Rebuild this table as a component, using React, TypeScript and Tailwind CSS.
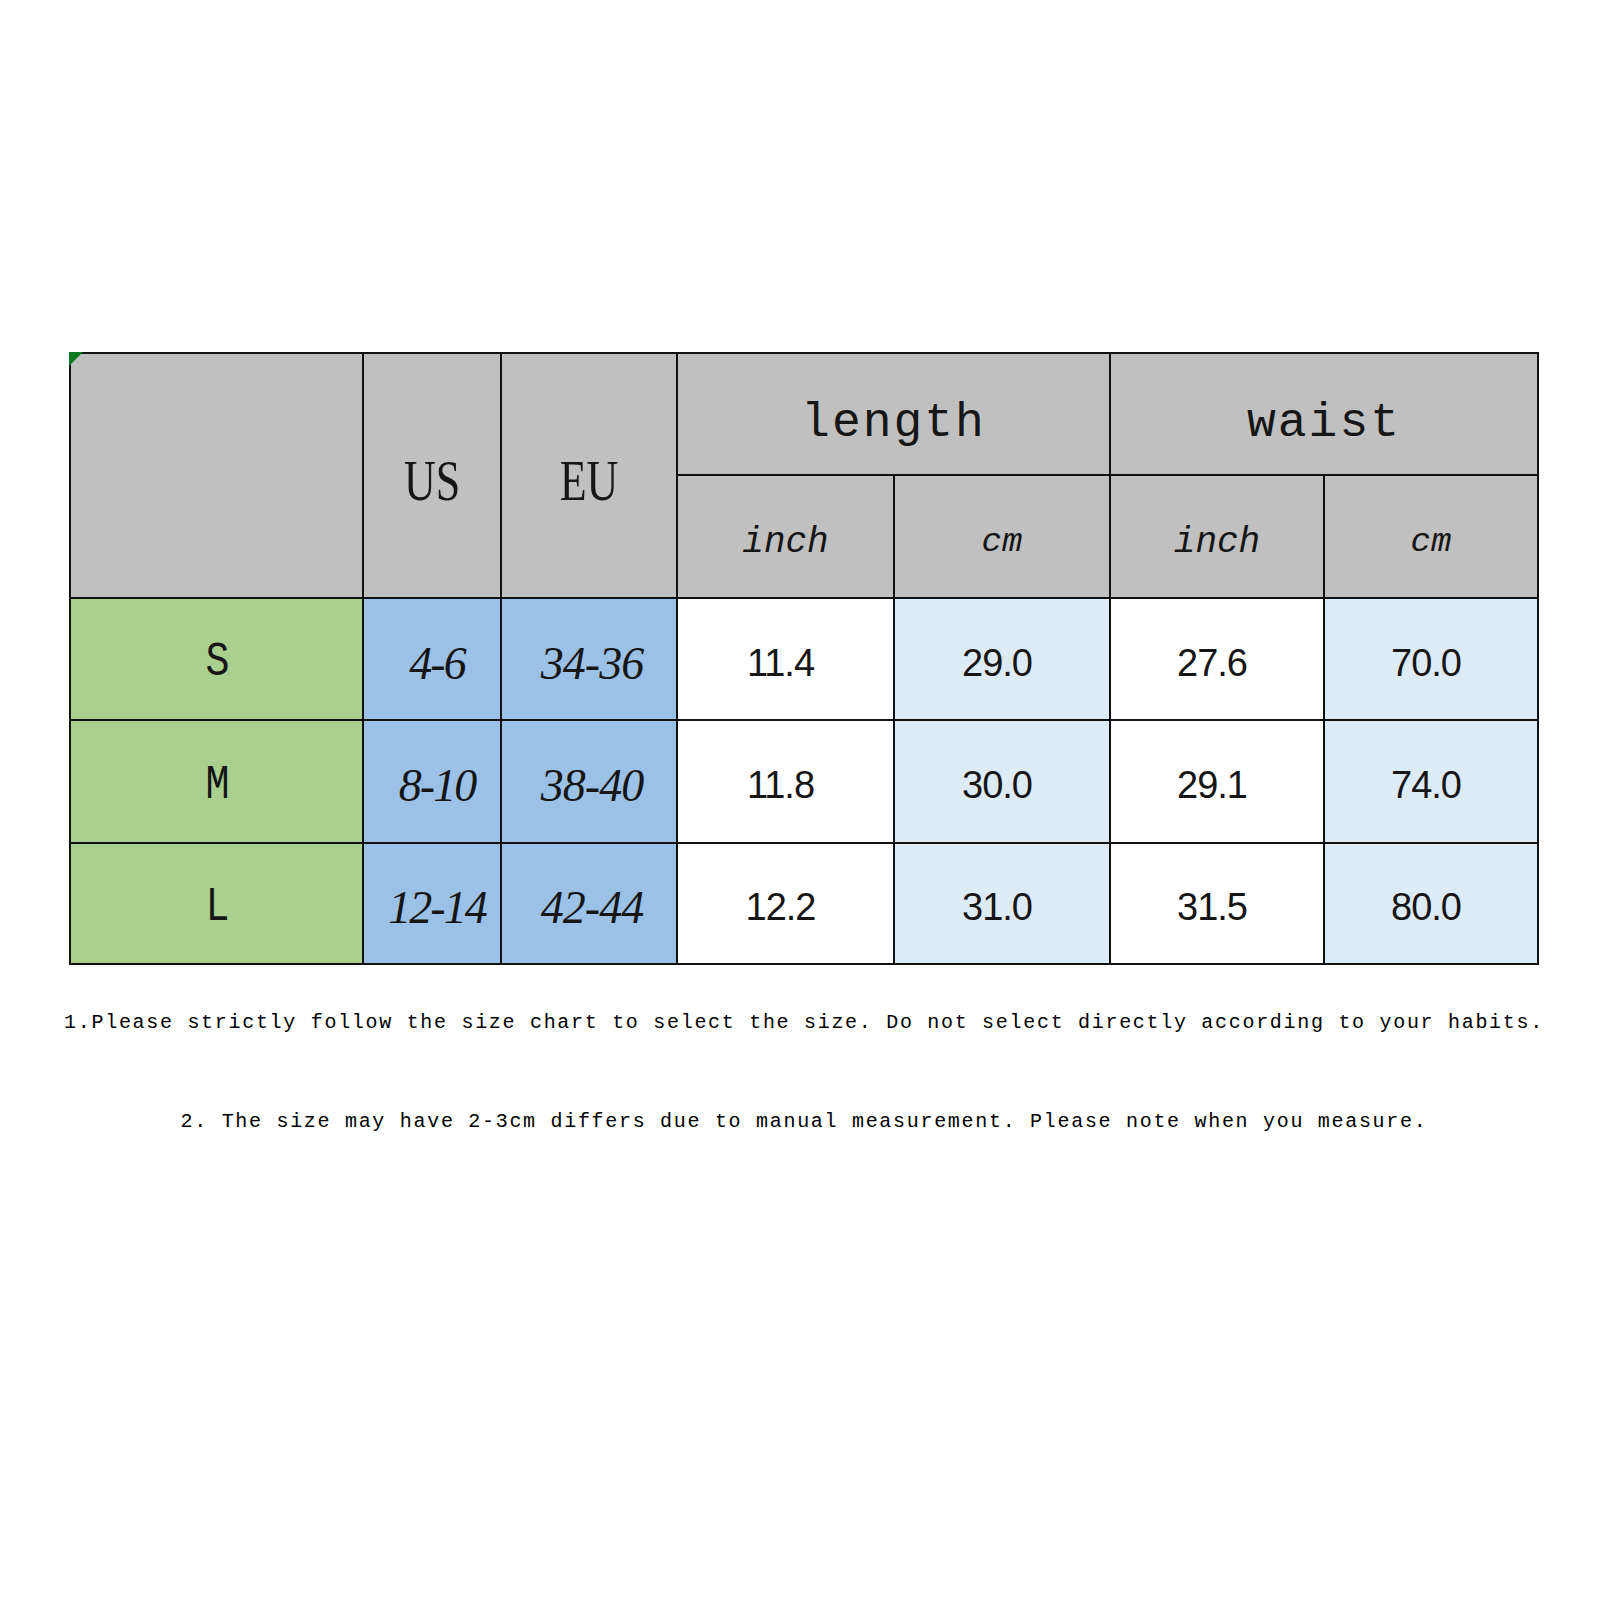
const ROWS = [
  { size: 'S', us: '4-6', eu: '34-36', vals: ['11.4', '29.0', '27.6', '70.0'] },
  { size: 'M', us: '8-10', eu: '38-40', vals: ['11.8', '30.0', '29.1', '74.0'] },
  { size: 'L', us: '12-14', eu: '42-44', vals: ['12.2', '31.0', '31.5', '80.0'] },
];

const MONO = "font-['Liberation_Mono','DejaVu_Sans_Mono',monospace]";
const SERIF = "font-['Liberation_Serif','DejaVu_Serif',serif]";
const SANS = "font-['Liberation_Sans',Arial,sans-serif]";

function Cell({ className, children }: { className?: string; children?: React.ReactNode }) {
  return (
    <div className={`flex items-center justify-center text-[#161616] ${className ?? ''}`}>
      {children}
    </div>
  );
}

export default function App() {
  return (
    <div className="min-h-[1600px] w-[1600px] bg-white pt-[352px] pl-[69px]">
      <div className="w-[1470px]">
        {/* size table */}
        <div className="relative grid grid-cols-[291px_136px_174px_215px_214px_212px_212px] grid-rows-[120px_121px_120px_121px_119px] gap-[2px] bg-[#111] p-[2px]">
          <div className="absolute left-0 top-0 h-0 w-0 border-l-[7px] border-t-[7px] border-l-[#0b7a1e] border-t-[#0b7a1e] border-r-[7px] border-b-[7px] border-r-transparent border-b-transparent" />
          <Cell className="row-span-2 bg-[#c0c0c0]" />
          <Cell className={`row-span-2 bg-[#c0c0c0] pt-[12px] ${SERIF} text-[44px]`}>
            <span className="inline-block scale-y-[1.3]">US</span>
          </Cell>
          <Cell className={`row-span-2 bg-[#c0c0c0] pt-[12px] ${SERIF} text-[44px]`}>
            <span className="inline-block scale-y-[1.3]">EU</span>
          </Cell>
          <Cell className={`col-span-2 bg-[#c0c0c0] pt-[18px] ${MONO} text-[48px] tracking-[2px]`}>length</Cell>
          <Cell className={`col-span-2 bg-[#c0c0c0] pt-[18px] ${MONO} text-[48px] tracking-[2px]`}>waist</Cell>
          <Cell className={`bg-[#c0c0c0] pt-[12px] ${MONO} text-[36px] italic`}>inch</Cell>
          <Cell className={`bg-[#c0c0c0] pt-[12px] ${MONO} text-[34px] italic`}>cm</Cell>
          <Cell className={`bg-[#c0c0c0] pt-[12px] ${MONO} text-[36px] italic`}>inch</Cell>
          <Cell className={`bg-[#c0c0c0] pt-[12px] ${MONO} text-[34px] italic`}>cm</Cell>

          {ROWS.map((r) => (
            <div key={r.size} className="contents">
              <Cell className={`bg-[#a9d08e] pt-[8px] pl-[2px] ${MONO} text-[40px]`}>
                <span className="inline-block scale-y-[1.2]">{r.size}</span>
              </Cell>
              <Cell className={`bg-[#9bc2e6] pt-[8px] pl-[10px] ${SERIF} text-[46px] italic tracking-[-2px]`}>{r.us}</Cell>
              <Cell className={`bg-[#9bc2e6] pt-[8px] pl-[6px] ${SERIF} text-[46px] italic tracking-[-1px]`}>{r.eu}</Cell>
              {r.vals.map((v, i) => (
                <Cell
                  key={i}
                  className={`${i % 2 === 0 ? 'bg-white' : 'bg-[#ddebf7]'} pt-[8px] pr-[10px] ${SANS} text-[38px] tracking-[-1px]`}
                >
                  {v}
                </Cell>
              ))}
            </div>
          ))}
        </div>

        {/* notes */}
        <div className={`mt-[46px] flex flex-col items-center gap-[75px] ${MONO} text-[20px] leading-[24px] tracking-[1.7px] text-black`}>
          <p className="whitespace-nowrap">
            1.Please strictly follow the size chart to select the size. Do not select directly according to your habits.
          </p>
          <p className="whitespace-nowrap">
            2. The size may have 2-3cm differs due to manual measurement. Please note when you measure.
          </p>
        </div>
      </div>
    </div>
  );
}
